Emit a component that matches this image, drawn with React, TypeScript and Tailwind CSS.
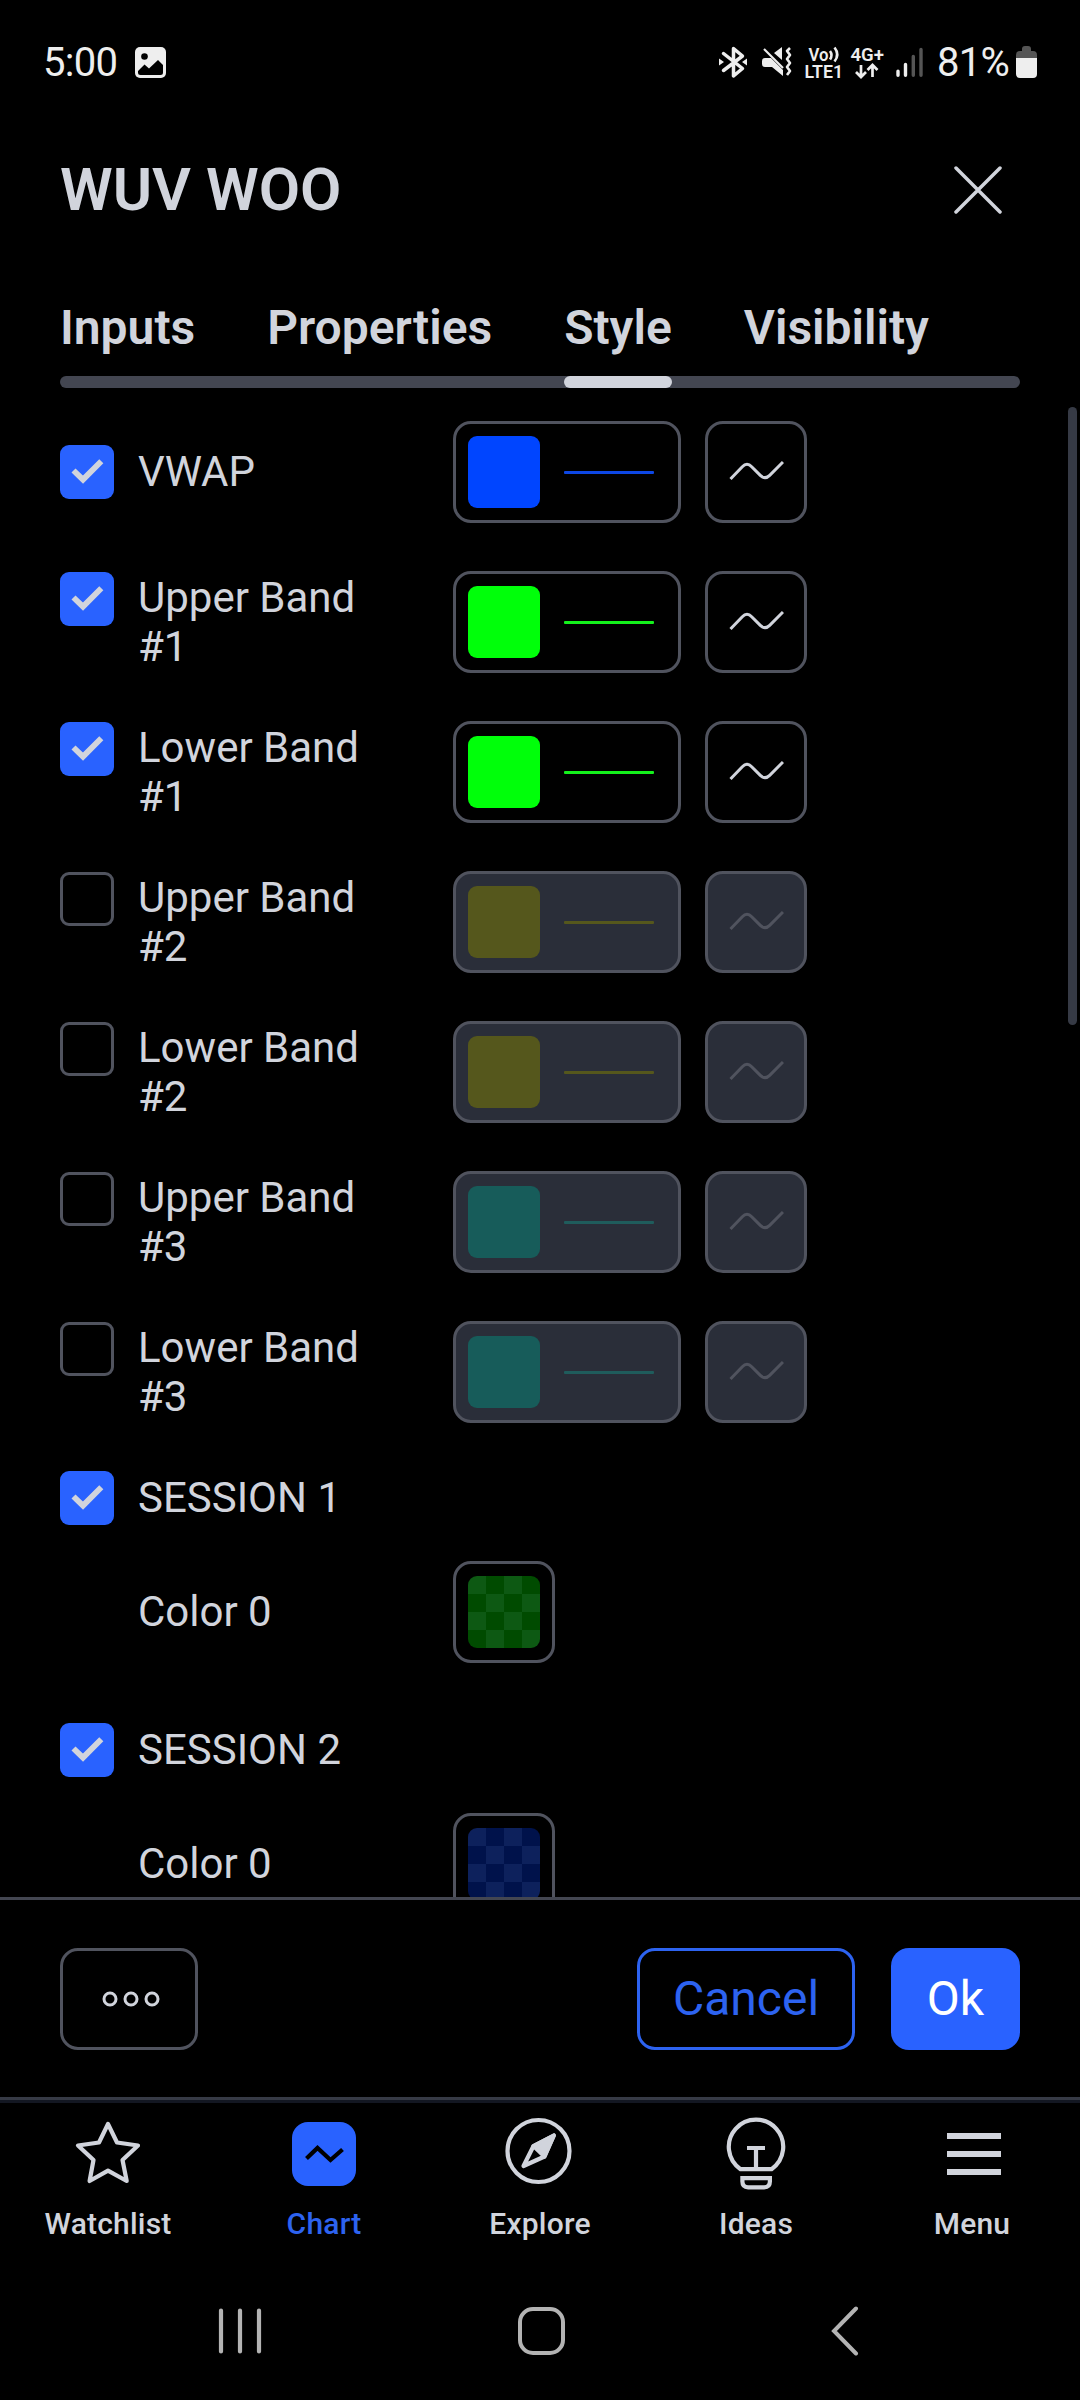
import React from "react";

const WAVE = "M1.500 19 13.300 6.800q4.700-5.200 9.400 0l8.600 8.600q4.700 4.600 9.400 0L54 2";

function Check({ on }: { on: boolean }) {
  if (!on) return <span className="size-[54px] shrink-0 rounded-[9px] border-3 border-[#50535e]" />;
  return (
    <span className="flex size-[54px] shrink-0 rounded-[9px] bg-[#2962ff]">
      <svg viewBox="0 0 54 54" className="size-[54px]" fill="none" stroke="#d1d4dc" strokeWidth="5.800">
        <path d="M13.500 25.500 23 34.600 41.300 16.300" />
      </svg>
    </span>
  );
}

type Band = { label: string; on: boolean; fill: string; line: string };

const bands: Band[] = [
  { label: "VWAP", on: true, fill: "bg-[#0045ff]", line: "bg-[#0d47e5]" },
  { label: "Upper Band #1", on: true, fill: "bg-[#00ff0a]", line: "bg-[#14f01c]" },
  { label: "Lower Band #1", on: true, fill: "bg-[#00ff0a]", line: "bg-[#14f01c]" },
  { label: "Upper Band #2", on: false, fill: "bg-[#55571c]", line: "bg-[#55571c]" },
  { label: "Lower Band #2", on: false, fill: "bg-[#55571c]", line: "bg-[#55571c]" },
  { label: "Upper Band #3", on: false, fill: "bg-[#175c5a]", line: "bg-[#1f5c5c]" },
  { label: "Lower Band #3", on: false, fill: "bg-[#175c5a]", line: "bg-[#1f5c5c]" },
];

function BandRow({ label, on, fill, line }: Band) {
  const bg = on ? "" : "bg-[#2a2e39]";
  const single = label.length < 8;
  return (
    <div className="flex h-[102px]">
      <div className={single ? "flex w-[393px] items-start gap-6 pt-6" : "flex w-[393px] items-start gap-6 pt-px"}>
        <Check on={on} />
        <span className={single ? "mt-0.5 w-[250px] leading-[49px]" : "mt-px w-[250px] leading-[49px]"}>{label}</span>
      </div>
      <div className={`flex h-[102px] w-[228px] items-center rounded-[18px] border-3 border-[#50535e] pl-3 ${bg}`}>
        <span className={`size-[72px] rounded-[9px] ${fill}`} />
        <span className={`mt-px ml-6 h-[3px] w-[90px] rounded-[1px] ${line}`} />
      </div>
      <div className={`ml-6 flex size-[102px] justify-center rounded-[18px] border-3 border-[#50535e] pt-[36px] pl-px ${bg}`}>
        <svg viewBox="0 0 55 21" className={on ? "h-[21px] w-[55px] text-[#d1d4dc]" : "h-[21px] w-[55px] text-[#50535e]"} fill="none" stroke="currentColor" strokeWidth="3">
          <path d={WAVE} />
        </svg>
      </div>
    </div>
  );
}

function Session({ label, a, b }: { label: string; a: string; b: string }) {
  return (
    <div className="h-[252px]">
      <div className="flex h-[54px] gap-6">
        <Check on />
        <span className="mt-0.5 leading-[49px]">{label}</span>
      </div>
      <div className="mt-9 flex h-[102px] items-center pl-[78px]">
        <span className="mb-px w-[315px] leading-[49px]">Color 0</span>
        <div className="rounded-[18px] border-3 border-[#50535e] p-3">
          <div className="grid size-[72px] grid-cols-4 overflow-hidden rounded-[9px]">
            {Array.from({ length: 16 }, (_, i) => (
              <span key={i} className={(i + Math.floor(i / 4)) % 2 === 0 ? a : b} />
            ))}
          </div>
        </div>
      </div>
    </div>
  );
}

function StatusBar() {
  return (
    <header className="flex h-[124px] items-center pl-[43px] text-[40px] text-[#eee]">
      <span className="mt-0.5 w-[92px] tracking-[-0.7px]">5:00</span>
      <svg viewBox="0 0 31 31" className="size-[31px]">
        <rect width="31" height="31" rx="5" fill="#eee" />
        <circle cx="9.500" cy="9.500" r="3.300" fill="#000" />
        <path d="M3 24 9.500 17.500 14 21.500 23 13l5 5v7.500q0 2.500-2.500 2.500h-20Q3 28 3 25.500z" fill="#000" />
      </svg>
      <svg viewBox="0 -5 218 42" className="ml-[553px] h-[42px] w-[218px] shrink-0 overflow-visible">
        <g fill="none" stroke="#eee">
          <path d="M4.500 7.500 23.500 22.500 14.500 30V2.500l9 7.500L4.500 24.500" strokeWidth="3.500" strokeLinejoin="round" strokeLinecap="round" />
          <path d="M0 12.500v7l5-3.500zM28 12.500v7L23 16z" fill="#eee" stroke="none" />
          <path d="M43 15q0-3 3-3h6l12 12v6L53 21h-7q-3 0-3-3zM55 7l8-6v13z" fill="#eee" stroke="none" />
          <path d="M45 3 64 22" strokeWidth="2.200" />
          <path d="m71 2-3 3 3 4-3 4 3 4-3 4 3 4-3 4" strokeWidth="2.600" strokeLinejoin="round" />
          <path d="M111 5q3 4 0 8.500M115.500 1.500q5.500 7 0 14" strokeWidth="2.600" />
          <path d="M142 19v12m-5-5 5 5 5-5M153.500 31V19m-5 5 5-5 5 5" strokeWidth="2.700" />
          <g stroke="none" fill="#eee" fontFamily="Roboto" fontWeight="600">
            <text x="89.500" y="14.500" fontSize="19" textLength="20" lengthAdjust="spacingAndGlyphs">Vo</text>
            <text x="85.500" y="31.500" fontSize="19" textLength="38.500" lengthAdjust="spacingAndGlyphs">LTE1</text>
            <text x="131.500" y="14.500" fontSize="19" textLength="33.500" lengthAdjust="spacingAndGlyphs">4G+</text>
          </g>
          <path d="M179 25.200v4M186.500 18.500v10.700" strokeWidth="3.400" strokeLinecap="round" />
          <path d="M194.300 10.500v18.700M202 3.500v25.700" stroke="#555" strokeWidth="3.400" strokeLinecap="round" />
        </g>
      </svg>
      <span className="mt-0.5 w-[79px] shrink-0 tracking-[-0.7px]">81%</span>
      <svg viewBox="0 0 21 32" className="h-8 w-[21px] shrink-0">
        <path d="M6 3q0-3 3-3h3q3 0 3 3v2h2q4 0 4 4v4H0V9q0-4 4-4h2z" fill="#555" />
        <path d="M0 12h21v16q0 4-4 4H4q-4 0-4-4z" fill="#eee" />
      </svg>
    </header>
  );
}

function NavItem({ label, active, children }: { label: string; active?: boolean; children: React.ReactNode }) {
  return (
    <div className={active ? "flex w-[216px] flex-col items-center text-[#2d63f0]" : "flex w-[216px] flex-col items-center"}>
      <svg viewBox="0 0 72 84" className="h-[84px] w-[72px]" fill="none" stroke="#d1d4dc" strokeWidth="4.200" strokeLinejoin="round">
        {children}
      </svg>
      <span className="mt-[10px] text-[30px] leading-[36px] font-medium tracking-[0.2px]">{label}</span>
    </div>
  );
}

export default function App() {
  return (
    <div className="flex h-[2400px] w-[1080px] flex-col overflow-hidden bg-black font-['Roboto',sans-serif] text-[42px] text-[#d1d4dc]">
      <StatusBar />
      <div className="flex h-[132px] items-center justify-between pr-[78px] pl-[60px]">
        <h1 className="text-[60px] font-semibold">WUV WOO</h1>
        <svg viewBox="0 0 48 48" className="size-12" stroke="#d1d4dc" strokeWidth="3.500" strokeLinecap="round">
          <path d="m2 2 44 44M46 2 2 46" />
        </svg>
      </div>
      <div className="mx-[60px] flex h-[120px] gap-[72px] pt-[44px] text-[48px] leading-[56px] font-semibold">
        <span>Inputs</span>
        <span>Properties</span>
        <span>Style</span>
        <span>Visibility</span>
      </div>
      <div className="mx-[60px] flex h-3 shrink-0 rounded-full bg-[#434651]">
        <span className="ml-[504px] w-[108px] rounded-full bg-[#d1d4dc]" />
      </div>
      <main className="flex h-[1509px] shrink-0 justify-between overflow-hidden pr-[3px] pl-[60px]">
        <div className="pt-[33px]">
          <div className="flex flex-col gap-12">
            {bands.map((b) => (
              <BandRow key={b.label} {...b} />
            ))}
          </div>
          <div className="mt-12">
            <Session label="SESSION 1" a="bg-[#0d5913]" b="bg-[#004b00]" />
            <Session label="SESSION 2" a="bg-[#0d215c]" b="bg-[#00124b]" />
          </div>
        </div>
        <div className="mt-[19px] h-[618px] w-[9px] rounded-full bg-[#363a45]" />
      </main>
      <div className="flex h-[200px] shrink-0 items-start border-t-3 border-[#434651] px-[60px] pt-12 text-[48px]">
        <div className="flex h-[102px] w-[138px] items-center justify-center rounded-[18px] border-3 border-[#50535e] pl-[3px]">
          <svg viewBox="0 0 58 16" className="h-4 w-[58px]" fill="none" stroke="#d1d4dc" strokeWidth="3">
            <circle cx="8" cy="8" r="6" />
            <circle cx="29" cy="8" r="6" />
            <circle cx="50" cy="8" r="6" />
          </svg>
        </div>
        <div className="ml-auto flex h-[102px] w-[218px] items-center justify-center rounded-[18px] border-3 border-[#2d63f0] text-[#2d63f0]">
          Cancel
        </div>
        <div className="ml-9 flex h-[102px] w-[129px] items-center justify-center rounded-[18px] bg-[#2962ff] text-white">Ok</div>
      </div>
      <nav className="flex h-[163px] shrink-0 border-t-3 border-[#363a45]">
        <div className="flex w-full border-t-3 border-[#131722] pt-[9px]">
          <NavItem label="Watchlist">
            <path d="M36 12 45 30.500 66 33.500 50.500 48 54.700 69 36 58.700 17.600 69 21.500 48 6 33.500 27 30.500z" />
          </NavItem>
          <NavItem label="Chart" active>
            <rect x="4" y="10" width="64" height="64" rx="16" fill="#2962ff" stroke="none" />
            <path d="M18.500 46.500 29.500 36 42.500 48 54.500 37.500" stroke="#000" strokeLinejoin="miter" />
          </NavItem>
          <NavItem label="Explore">
            <circle cx="34.500" cy="39" r="31" />
            <path d="M19.500 54 29.500 34 49.800 23.500 40.500 44.500z" />
            <path d="M29.500 34 49.800 23.500 40.500 44.500z" fill="#d1d4dc" />
          </NavItem>
          <NavItem label="Ideas">
            <path d="M20.500 57.200A27.200 27.200 0 1 1 51.500 57.200zM36 57V36M27 36h18M22.400 66.100h27.500v3.500q0 5.700-5.700 5.700H28.100q-5.700 0-5.700-5.700z" strokeLinejoin="miter" />
          </NavItem>
          <NavItem label="Menu">
            <path d="M11 24h54M11 42h54M11 60h54" strokeWidth="6" />
          </NavItem>
        </div>
      </nav>
      <div className="flex h-[140px] shrink-0 items-center pt-[2px] pl-[218px]">
        <svg viewBox="0 0 44 48" className="h-12 w-[44px]" stroke="#b3b3b3" strokeWidth="4.200" strokeLinecap="round">
          <path d="M3 3.500v41M22 3.500v41M41 3.500v41" />
        </svg>
        <div className="ml-[256px] h-12 w-[47px] rounded-[15px] border-4 border-[#b3b3b3]" />
        <svg viewBox="0 0 28 50" className="ml-[266px] h-[50px] w-7" fill="none" stroke="#b3b3b3" strokeWidth="4" strokeLinecap="round">
          <path d="M25 2.500 3 25l22 22.500" />
        </svg>
      </div>
    </div>
  );
}
